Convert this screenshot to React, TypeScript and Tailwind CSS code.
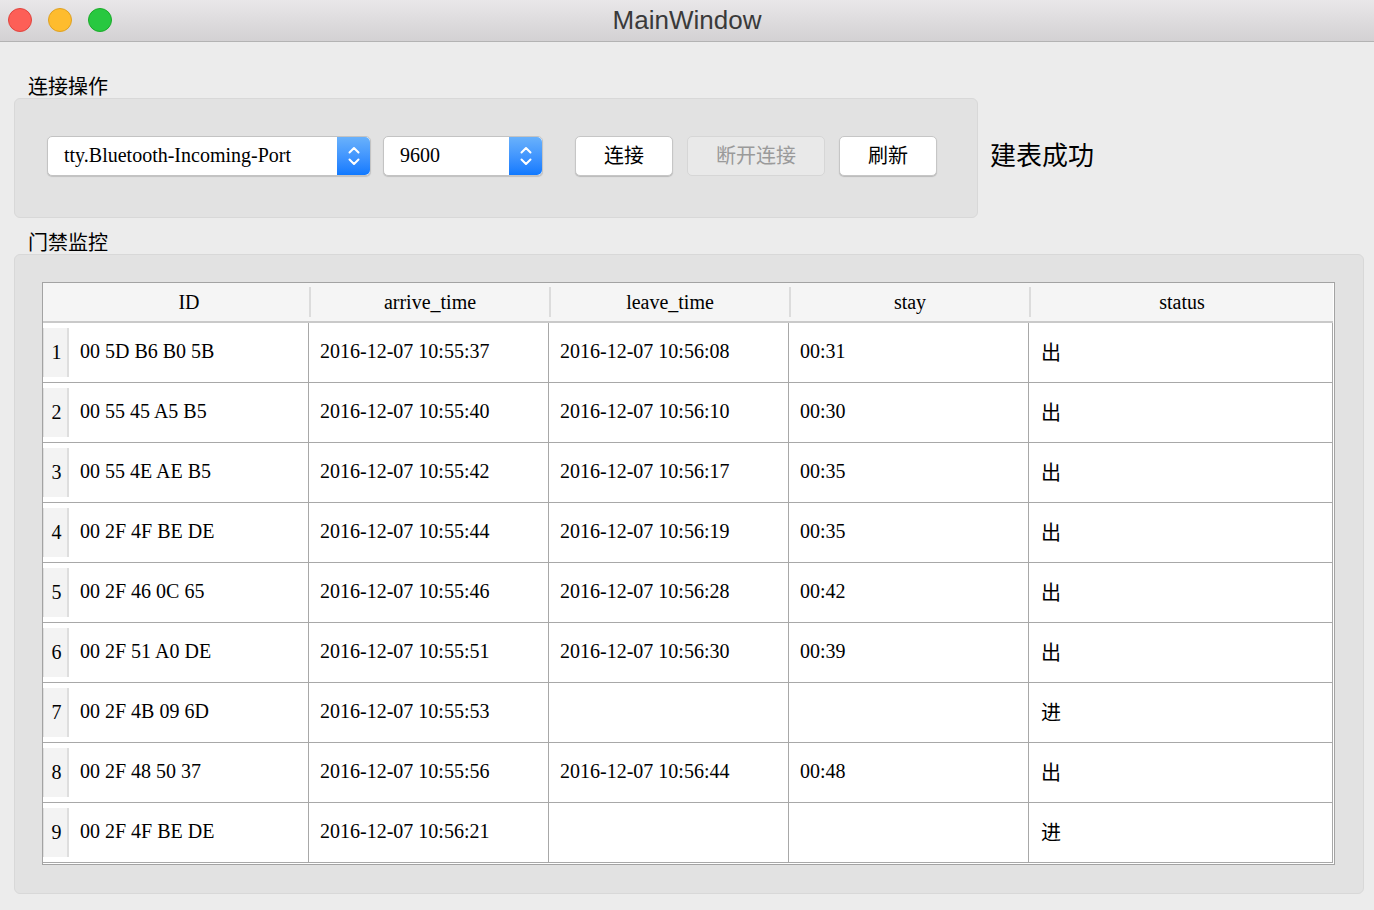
import React from "react";

const serif = { fontFamily: '"Liberation Serif", "Noto Sans CJK SC", serif' };
const sans = { fontFamily: '"Liberation Sans", "Noto Sans CJK SC", sans-serif' };

const rows = [
  ["00 5D B6 B0 5B", "2016-12-07 10:55:37", "2016-12-07 10:56:08", "00:31", "出"],
  ["00 55 45 A5 B5", "2016-12-07 10:55:40", "2016-12-07 10:56:10", "00:30", "出"],
  ["00 55 4E AE B5", "2016-12-07 10:55:42", "2016-12-07 10:56:17", "00:35", "出"],
  ["00 2F 4F BE DE", "2016-12-07 10:55:44", "2016-12-07 10:56:19", "00:35", "出"],
  ["00 2F 46 0C 65", "2016-12-07 10:55:46", "2016-12-07 10:56:28", "00:42", "出"],
  ["00 2F 51 A0 DE", "2016-12-07 10:55:51", "2016-12-07 10:56:30", "00:39", "出"],
  ["00 2F 4B 09 6D", "2016-12-07 10:55:53", "", "", "进"],
  ["00 2F 48 50 37", "2016-12-07 10:55:56", "2016-12-07 10:56:44", "00:48", "出"],
  ["00 2F 4F BE DE", "2016-12-07 10:56:21", "", "", "进"],
];

function Chevrons() {
  return (
    <svg width="14" height="24" viewBox="0 0 14 24" fill="none">
      <path d="M2.5 8.5 L7 4 L11.5 8.5" stroke="white" strokeWidth="2" strokeLinecap="round" strokeLinejoin="round" />
      <path d="M2.5 15.5 L7 20 L11.5 15.5" stroke="white" strokeWidth="2" strokeLinecap="round" strokeLinejoin="round" />
    </svg>
  );
}

function Combo({ text, width }: { text: string; width: string }) {
  return (
    <div className={`flex h-[40px] ${width} rounded-[5px] border border-[#c3c3c3] bg-white shadow-[0_1px_1px_rgba(0,0,0,0.15)]`}>
      <div className="flex flex-1 items-center pb-[2px] pl-[16px] text-[20px] text-black" style={serif}>
        {text}
      </div>
      <div className="flex w-[33px] items-center justify-center rounded-r-[5px] bg-gradient-to-b from-[#69b1fb] to-[#0e79ff]">
        <Chevrons />
      </div>
    </div>
  );
}

function Button({ label, width, disabled }: { label: string; width: string; disabled?: boolean }) {
  return (
    <div
      className={`flex h-[40px] ${width} items-center justify-center rounded-[5px] text-[20px] ${
        disabled
          ? "border border-[#d6d6d6] bg-[#e9e9e9] text-[#9a9a9a]"
          : "border border-[#c6c6c6] bg-white text-black shadow-[0_1px_1px_rgba(0,0,0,0.18)]"
      }`}
      style={serif}
    >
      {label}
    </div>
  );
}

export default function App() {
  return (
    <div className="h-[910px] w-[1374px] overflow-hidden bg-[#ececec]">
      {/* title bar */}
      <div className="relative flex h-[42px] items-center justify-center border-b border-[#b3b3b3] bg-gradient-to-b from-[#e9e7e9] to-[#d3d1d3]">
        <div className="absolute left-[8px] top-[8px] flex gap-[16px]">
          <div className="h-[24px] w-[24px] rounded-full border border-[#e0443e] bg-[#fd5f57]" />
          <div className="h-[24px] w-[24px] rounded-full border border-[#dea123] bg-[#febc2e]" />
          <div className="h-[24px] w-[24px] rounded-full border border-[#1aab29] bg-[#28c840]" />
        </div>
        <span className="text-[26px] text-[#3a3a3a]" style={sans}>
          MainWindow
        </span>
      </div>

      <div className="px-[14px] pt-[34px]">
        <div className="ml-[14px] h-[22px] text-[20px] leading-[22px] text-black" style={serif}>
          连接操作
        </div>
        <div className="flex items-center">
          <div className="flex h-[120px] w-[964px] items-center gap-[12px] rounded-[6px] border border-[#d8d8d8] bg-[#e2e2e2] pl-[32px] pb-[4px]">
            <Combo text="tty.Bluetooth-Incoming-Port" width="w-[324px]" />
            <Combo text="9600" width="w-[160px]" />
            <div className="ml-[20px] flex gap-[14px]">
              <Button label="连接" width="w-[98px]" />
              <Button label="断开连接" width="w-[138px]" disabled />
              <Button label="刷新" width="w-[98px]" />
            </div>
          </div>
          <div className="ml-[12px] pb-[4px] text-[26px] text-black" style={sans}>
            建表成功
          </div>
        </div>

        <div className="ml-[14px] mt-[14px] h-[22px] text-[20px] leading-[22px] text-black" style={serif}>
          门禁监控
        </div>
        <div className="h-[640px] w-[1350px] rounded-[6px] border border-[#d8d8d8] bg-[#e2e2e2] pl-[27px] pt-[27px]">
          <div className="w-[1293px] border border-[#a3a3a3] bg-white pb-px pr-px" style={serif}>
            {/* header */}
            <div className="flex h-[40px] border-b-2 border-[#c9c9c9] bg-[#f5f5f5] text-[20px] text-black">
              <div className="w-[26px]" />
              <div className="flex w-[240px] items-center justify-center">ID</div>
              {["arrive_time", "leave_time", "stay"].map((h) => (
                <div key={h} className="flex w-[240px] items-center">
                  <div className="h-[30px] w-[2px] bg-[#dcdcdc]" />
                  <div className="flex-1 text-center">{h}</div>
                </div>
              ))}
              <div className="flex flex-1 items-center">
                <div className="h-[30px] w-[2px] bg-[#dcdcdc]" />
                <div className="flex-1 text-center">status</div>
              </div>
            </div>
            {/* rows */}
            {rows.map((r, i) => (
              <div key={i} className="flex h-[60px] border-b border-[#a8a8a8] text-[20px] text-black">
                <div className="flex w-[26px] py-[5px]">
                  <div className="flex flex-1 items-center justify-center border-l border-r-2 border-[#dedede] bg-[#f3f3f3] pl-[2px] pb-[1px]">
                    {i + 1}
                  </div>
                </div>
                {r.slice(0, 4).map((c, j) => (
                  <div key={j} className="flex w-[240px] items-center border-r border-[#a8a8a8] pb-[3px] pl-[11px]">
                    {c}
                  </div>
                ))}
                <div className="flex flex-1 items-center border-r border-[#a8a8a8] pl-[12px]">{r[4]}</div>
              </div>
            ))}
          </div>
        </div>
      </div>
    </div>
  );
}
